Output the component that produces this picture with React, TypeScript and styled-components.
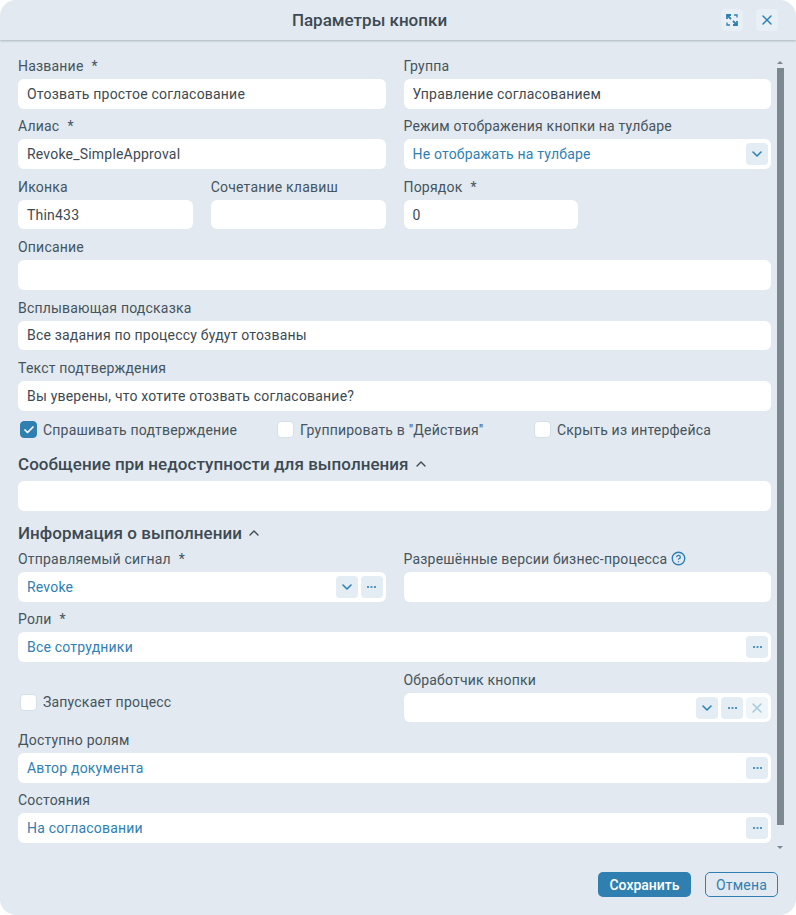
import React from "react";
import styled, { createGlobalStyle } from "styled-components";
import { Check, ChevronDown, ChevronUp, CircleHelp, X } from "lucide-react";

const GlobalStyle = createGlobalStyle`
  html, body {
    margin: 0;
    padding: 0;
    background: #fff;
  }
  * {
    box-sizing: border-box;
  }
`;

const Modal = styled.div`
  display: flex;
  flex-direction: column;
  width: 796px;
  height: 915px;
  border-radius: 16px;
  background: #e2e9f0;
  color: #46545e;
  font-family: Roboto, sans-serif;
  font-size: 14px;
  overflow: hidden;
`;

const Header = styled.header`
  display: flex;
  align-items: center;
  flex: none;
  height: 40px;
  padding: 0 18px;
  box-shadow: 0 1px 2px rgba(70, 84, 94, 0.35);
`;

const Title = styled.h1`
  flex: 1;
  margin: 0;
  text-align: center;
  font-size: 17px;
  font-weight: 500;
  color: #3d4a53;
`;

const HeaderActions = styled.div`
  display: flex;
  gap: 13px;
`;

const IconButton = styled.button<{ $faded?: boolean; $light?: boolean }>`
  display: flex;
  align-items: center;
  justify-content: center;
  flex: none;
  width: 22px;
  height: 22px;
  padding: 0;
  border: 0;
  border-radius: 4px;
  background: ${(p) => (p.$faded ? "#f0f5f9" : p.$light ? "#e8f0f6" : "#e4edf3")};
  color: ${(p) => (p.$faded ? "#a3c8df" : "#2f80b4")};
`;

const Main = styled.div`
  display: flex;
  flex: 1;
  min-height: 0;
  padding: 16px 12px 0 18px;
  gap: 5px;
`;

const Form = styled.form`
  display: flex;
  flex-direction: column;
  flex: 1;
  min-width: 0;
  gap: 7.8px;

  & > * {
    flex: none;
  }
`;

const TwoColumns = styled.div`
  display: grid;
  grid-template-columns: 1fr 1fr;
  gap: 18px;
`;

const FourColumns = styled.div`
  display: grid;
  grid-template-columns: repeat(4, 1fr);
  gap: 18px;
`;

const ThreeColumns = styled.div`
  display: grid;
  grid-template-columns: repeat(3, 1fr);
  gap: 18px;
  height: 23px;
  margin-bottom: 4.8px;
`;

const Field = styled.div`
  display: flex;
  flex-direction: column;
  min-width: 0;
`;

const Label = styled.label`
  display: flex;
  align-items: center;
  height: 20px;
  margin-bottom: 3px;
  line-height: 20px;
  letter-spacing: 0.2px;
`;

const Required = styled.span`
  margin-left: 8px;
`;

const Hint = styled.span`
  display: flex;
  margin-left: 4px;
  color: #2f80b4;
`;

const InputBox = styled.div<{ $link?: boolean }>`
  display: flex;
  align-items: center;
  flex: none;
  height: 29.6px;
  padding: 0 3px 0 9px;
  border-radius: 6px;
  background: #fff;
  color: ${(p) => (p.$link ? "#2f80b4" : "#3d4a53")};
  letter-spacing: 0.2px;
`;

const Value = styled.span`
  flex: 1;
  min-width: 0;
`;

const Actions = styled.div`
  display: flex;
  gap: 3px;
`;

const CheckField = styled.label`
  display: flex;
  align-items: center;
  padding-left: 2px;
  gap: 6px;
  letter-spacing: 0.2px;
`;

const CheckBox = styled.span<{ $checked?: boolean }>`
  display: flex;
  align-items: center;
  justify-content: center;
  flex: none;
  width: 17px;
  height: 17px;
  border-radius: 4px;
  border: 1px solid ${(p) => (p.$checked ? "#2f80b0" : "#d5e0e8")};
  background: ${(p) => (p.$checked ? "#2f80b0" : "#fff")};
  color: #fff;
`;

const AlignedCheck = styled(CheckField)`
  align-self: center;
  margin-top: 12px;
`;

const Section = styled.div`
  display: flex;
  flex-direction: column;
  gap: 7px;
`;

const SectionTitle = styled.h2<{ $tight?: boolean }>`
  display: flex;
  align-items: center;
  gap: 4px;
  flex: none;
  height: 20px;
  margin: ${(p) => (p.$tight ? "4.6px 0 -1.8px" : "0")};
  font-size: 17px;
  font-weight: 500;
  letter-spacing: 0.05px;
  color: #3d4a53;
`;

const Scrollbar = styled.div`
  display: flex;
  flex-direction: column;
  align-items: center;
  flex: none;
  width: 8px;
  padding-top: 5px;
`;

const ScrollThumb = styled.div`
  flex: none;
  width: 7px;
  height: 757px;
  margin: 4px 0 21px;
  background: #7c888f;
`;

const Arrow = styled.span<{ $down?: boolean }>`
  flex: none;
  width: 0;
  height: 0;
  border-left: 3.5px solid transparent;
  border-right: 3.5px solid transparent;
  ${(p) => (p.$down ? "border-top: 3px solid #7c888f;" : "border-bottom: 3px solid #7c888f;")}
`;

const Footer = styled.footer`
  display: flex;
  justify-content: flex-end;
  align-items: center;
  flex: none;
  height: 63px;
  padding: 2px 18px 0 0;
  gap: 14px;
`;

const SaveButton = styled.button`
  width: 93px;
  height: 25px;
  padding: 0;
  border: 0;
  border-radius: 5px;
  background: #2f80b0;
  color: #fff;
  font-family: Roboto, sans-serif;
  font-size: 14px;
  font-weight: 500;
`;

const CancelButton = styled.button`
  width: 73px;
  height: 25px;
  padding: 0;
  border: 1px solid #2f80b0;
  border-radius: 5px;
  background: transparent;
  color: #2f80b0;
  font-family: Roboto, sans-serif;
  font-size: 14px;
  letter-spacing: 0.2px;
`;

const ExpandIcon = () => (
  <svg width="12" height="12" viewBox="0 0 12 12" fill="none" stroke="currentColor" strokeWidth="1.8">
    <path d="M1 5V1h4" />
    <path d="M1.5 1.5l3.5 3.5" />
    <path d="M11 7v4H7" />
    <path d="M10.5 10.5L7 7" />
    <path d="M8 1h3v2.5" strokeWidth="1.3" />
    <path d="M1 8.5V11h3" strokeWidth="1.3" />
  </svg>
);

const DotsIcon = () => (
  <svg width="9" height="2" viewBox="0 0 9 2" fill="currentColor" opacity="0.8">
    <rect x="0" y="0" width="2" height="2" />
    <rect x="3.5" y="0" width="2" height="2" />
    <rect x="7" y="0" width="2" height="2" />
  </svg>
);

const Select = () => (
  <IconButton type="button">
    <ChevronDown size={16} strokeWidth={2.4} />
  </IconButton>
);

const More = () => (
  <IconButton type="button">
    <DotsIcon />
  </IconButton>
);

const App: React.FC = () => (
  <Modal>
    <GlobalStyle />
    <Header>
      <Title>Параметры кнопки</Title>
      <HeaderActions>
        <IconButton type="button" $light>
          <ExpandIcon />
        </IconButton>
        <IconButton type="button" $light>
          <X size={16} strokeWidth={2.2} />
        </IconButton>
      </HeaderActions>
    </Header>
    <Main>
      <Form>
        <TwoColumns>
          <Field>
            <Label>Название<Required>*</Required></Label>
            <InputBox>Отозвать простое согласование</InputBox>
          </Field>
          <Field>
            <Label>Группа</Label>
            <InputBox>Управление согласованием</InputBox>
          </Field>
        </TwoColumns>
        <TwoColumns>
          <Field>
            <Label>Алиас<Required>*</Required></Label>
            <InputBox>Revoke_SimpleApproval</InputBox>
          </Field>
          <Field>
            <Label>Режим отображения кнопки на тулбаре</Label>
            <InputBox $link>
              <Value>Не отображать на тулбаре</Value>
              <Select />
            </InputBox>
          </Field>
        </TwoColumns>
        <FourColumns>
          <Field>
            <Label>Иконка</Label>
            <InputBox>Thin433</InputBox>
          </Field>
          <Field>
            <Label>Сочетание клавиш</Label>
            <InputBox />
          </Field>
          <Field>
            <Label>Порядок<Required>*</Required></Label>
            <InputBox>0</InputBox>
          </Field>
        </FourColumns>
        <Field>
          <Label>Описание</Label>
          <InputBox />
        </Field>
        <Field>
          <Label>Всплывающая подсказка</Label>
          <InputBox>Все задания по процессу будут отозваны</InputBox>
        </Field>
        <Field>
          <Label>Текст подтверждения</Label>
          <InputBox>Вы уверены, что хотите отозвать согласование?</InputBox>
        </Field>
        <ThreeColumns>
          <CheckField>
            <CheckBox $checked><Check size={12} strokeWidth={3.4} /></CheckBox>
            Спрашивать подтверждение
          </CheckField>
          <CheckField>
            <CheckBox />
            Группировать в "Действия"
          </CheckField>
          <CheckField>
            <CheckBox />
            Скрыть из интерфейса
          </CheckField>
        </ThreeColumns>
        <Section>
          <SectionTitle>
            Сообщение при недоступности для выполнения
            <ChevronUp size={16} strokeWidth={2} />
          </SectionTitle>
          <InputBox />
        </Section>
        <SectionTitle $tight>
          Информация о выполнении
          <ChevronUp size={16} strokeWidth={2} />
        </SectionTitle>
        <TwoColumns>
          <Field>
            <Label>Отправляемый сигнал<Required>*</Required></Label>
            <InputBox $link>
              <Value>Revoke</Value>
              <Actions>
                <Select />
                <More />
              </Actions>
            </InputBox>
          </Field>
          <Field>
            <Label>
              Разрешённые версии бизнес-процесса
              <Hint><CircleHelp size={15} strokeWidth={2.2} /></Hint>
            </Label>
            <InputBox />
          </Field>
        </TwoColumns>
        <Field>
          <Label>Роли<Required>*</Required></Label>
          <InputBox $link>
            <Value>Все сотрудники</Value>
            <More />
          </InputBox>
        </Field>
        <TwoColumns>
          <AlignedCheck>
            <CheckBox />
            Запускает процесс
          </AlignedCheck>
          <Field>
            <Label>Обработчик кнопки</Label>
            <InputBox $link>
              <Value />
              <Actions>
                <Select />
                <More />
                <IconButton type="button" $faded>
                  <X size={16} strokeWidth={2.2} />
                </IconButton>
              </Actions>
            </InputBox>
          </Field>
        </TwoColumns>
        <Field>
          <Label>Доступно ролям</Label>
          <InputBox $link>
            <Value>Автор документа</Value>
            <More />
          </InputBox>
        </Field>
        <Field>
          <Label>Состояния</Label>
          <InputBox $link>
            <Value>На согласовании</Value>
            <More />
          </InputBox>
        </Field>
      </Form>
      <Scrollbar>
        <Arrow />
        <ScrollThumb />
        <Arrow $down />
      </Scrollbar>
    </Main>
    <Footer>
      <SaveButton type="button">Сохранить</SaveButton>
      <CancelButton type="button">Отмена</CancelButton>
    </Footer>
  </Modal>
);

export default App;
